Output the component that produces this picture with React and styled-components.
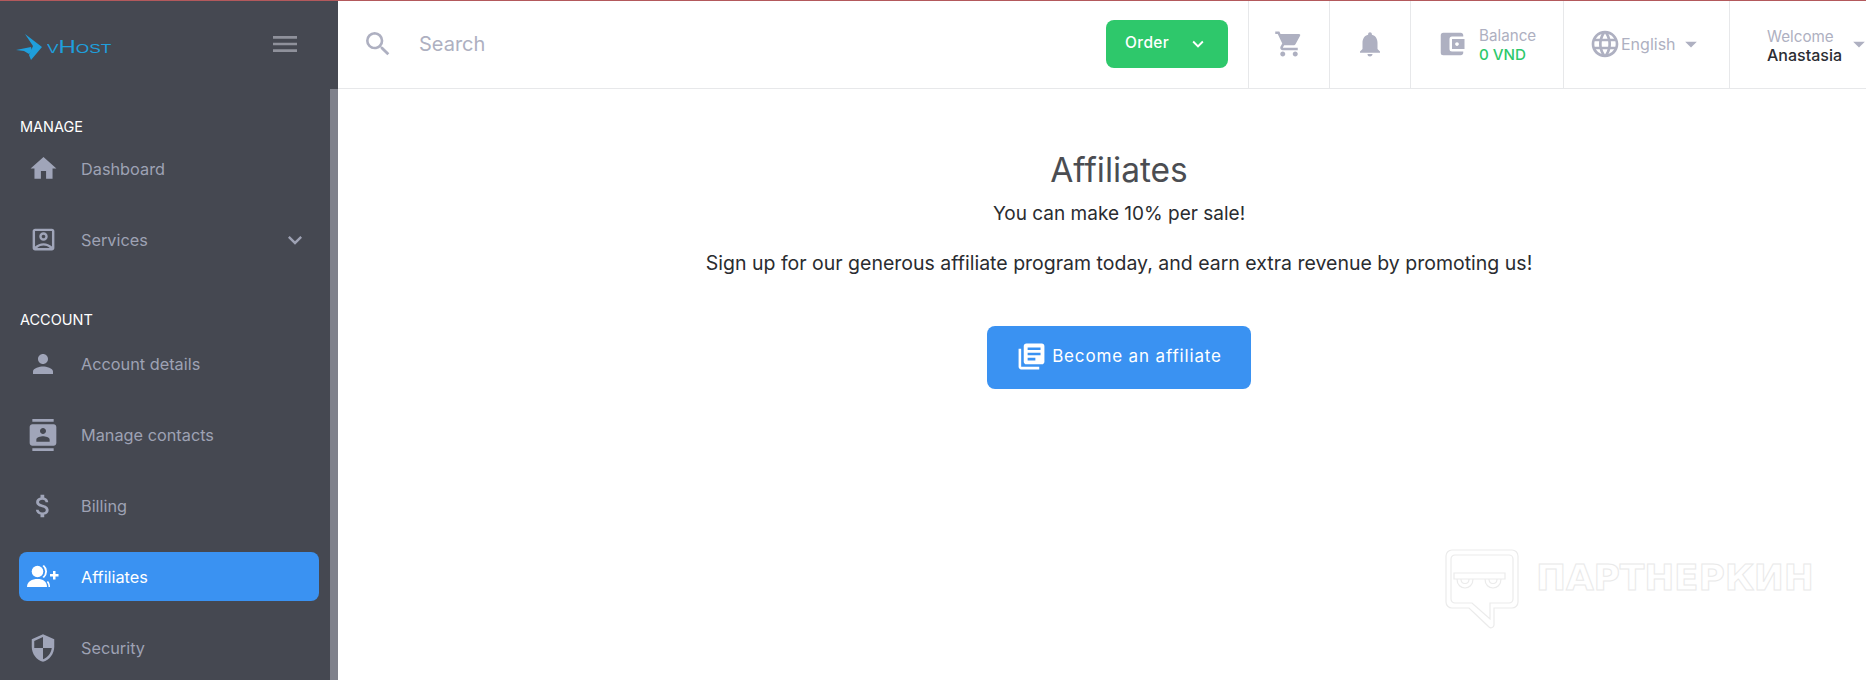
import React from "react";
import styled, { createGlobalStyle } from "styled-components";
import {
  MdHome, MdOutlineAccountBox, MdExpandMore, MdPerson, MdContacts, MdAttachMoney, MdSecurity,
  MdSearch, MdShoppingCart, MdNotifications, MdAccountBalanceWallet, MdLanguage, MdArrowDropDown, MdLibraryBooks, MdMenu,
} from "react-icons/md";

const FONT = `"Inter", "Noto Sans", "Liberation Sans", sans-serif`;

const Global = createGlobalStyle`
  html, body { margin: 0; padding: 0; height: 100%; background: #fff; overflow: hidden; }
  body { font-family: ${FONT}; }
  * { box-sizing: border-box; }
`;

const Page = styled.div`
  height: 680px; width: 1866px; display: flex; border-top: 1px solid #b3595c; overflow: hidden;
`;
const Sidebar = styled.aside`
  position: relative; width: 338px; flex: none; background: #454851; overflow: hidden;
`;
const Thumb = styled.div`
  position: absolute; top: 88px; right: 0; bottom: 0; width: 8px; background: #7f818b;
`;
const Brand = styled.div`
  height: 88px; display: flex; align-items: center; justify-content: space-between; padding: 0 37px 0 16px;
`;
const Logo = styled.div`
  display: flex; align-items: center; color: #1f9fdc; margin-top: 4px;
`;
const LogoText = styled.span`
  font-family: "Liberation Sans", sans-serif; font-size: 18px; line-height: 1; font-variant: small-caps;
  margin-left: 2px; transform: scaleX(1.33); transform-origin: left center;
`;
const MenuBtn = styled.div`
  display: flex; color: #8f919b; font-size: 32px; margin-bottom: 2px;
`;
const Section = styled.div`
  color: #fff; font-size: 14.5px; line-height: 20px; padding-left: 20px;
  margin-top: ${p => p.$top}px; margin-bottom: ${p => p.$bottom}px;
`;
const Item = styled.div`
  height: 49px; margin: 0 19px 22px; border-radius: 8px; display: flex; align-items: center;
  background: ${p => (p.$active ? "#3a92f2" : "transparent")};
  color: ${p => (p.$active ? "#fff" : "#9ea2b4")};
`;
const ItemIcon = styled.span`
  width: 48px; display: flex; justify-content: center; font-size: ${p => p.$size || 30}px; flex: none;
  color: ${p => (p.$active ? "#fff" : "#a0a5b9")};
  margin-right: 14px;
`;
const ItemLabel = styled.span`
  font-size: 16.3px; flex: 1; font-weight: 400;
`;
const ItemArrow = styled.span`
  display: flex; font-size: 28px; margin-right: 10px; color: #9ea2b4;
`;
const Right = styled.div`
  flex: 1; min-width: 0; display: flex; flex-direction: column;
`;
const Header = styled.header`
  height: 88px; flex: none; display: flex; align-items: stretch; border-bottom: 1px solid #e7e8ea; background: #fff;
`;
const SearchBox = styled.div`
  flex: 1; display: flex; align-items: center; padding: 0 0 2px 24px; color: #aeb0c1;
`;
const SearchIcon = styled.span`
  display: flex; font-size: 32px; margin-right: 25px;
`;
const SearchText = styled.span`
  font-size: 20px; color: #aeb0c1;
`;
const OrderBtn = styled.div`
  width: 122px; height: 48px; align-self: center; margin: 0 20px 2px 0; padding: 0 0 2px 19px; border-radius: 8px;
  background: #2ec86b; color: #fff;
  display: flex; align-items: center; font-size: 15.5px; font-weight: 500; letter-spacing: 0.4px;
`;
const OrderArrow = styled.span`
  display: flex; font-size: 22px; margin: 2px 0 0 18px;
`;
const Cell = styled.div`
  width: ${p => p.$w}px; flex: none; border-left: 1px solid #e7e8ea; display: flex; align-items: center;
  justify-content: ${p => (p.$center ? "center" : "flex-start")}; padding: 0 0 2px ${p => p.$pl || 0}px; color: #aeb0c1;
`;
const CellIcon = styled.span`
  display: flex; font-size: ${p => p.$size || 30}px;
`;
const Stack = styled.div`
  display: flex; flex-direction: column; margin-left: ${p => p.$ml || 0}px; margin-top: 3px;
`;
const Small = styled.span`
  font-size: 15.2px; line-height: 19px; color: #aeb0c1;
`;
const Money = styled.span`
  font-size: 15.2px; line-height: 19px; color: #2ec86b; font-weight: 500;
`;
const Name = styled.span`
  font-size: 16px; line-height: 18px; color: #2b2d33; font-weight: 500;
`;
const LangText = styled.span`
  font-size: 16px; color: #aeb0c1; margin-left: 0;
`;
const Caret = styled.span`
  display: flex; font-size: 28px; color: #aeb0c1; margin-left: ${p => p.$ml || 0}px;
`;
const Main = styled.main`
  flex: 1; padding: 62px 0 0 34px; display: flex; flex-direction: column; align-items: center; position: relative;
`;
const Title = styled.h1`
  margin: 0; font-size: 33.5px; line-height: 38px; font-weight: 400; color: #4b4d52;
`;
const Sub = styled.p`
  margin: 13px 0 0; font-size: 19px; line-height: 24px; color: #2a2c30;
`;
const Lead = styled.p`
  margin: 25px 0 0; font-size: 19.5px; line-height: 24px; color: #2a2c30;
`;
const Cta = styled.div`
  margin-top: 51px; width: 264px; height: 63px; padding-bottom: 3px; border-radius: 8px; background: #3a92f2; color: #fff;
  display: flex; align-items: center; justify-content: center; font-size: 17px; font-weight: 400; letter-spacing: 0.85px;
`;
const CtaIcon = styled.span`
  display: flex; font-size: 31px; margin-right: 5px;
`;
const Watermark = styled.div`
  position: absolute; left: 1107px; top: 460px; display: flex; align-items: center; pointer-events: none;
`;
const WatermarkText = styled.span`
  font-family: "DejaVu Sans", sans-serif; font-size: 36px; line-height: 1; font-weight: 700;
  color: transparent; -webkit-text-stroke: 1px #e9e9e9; margin-left: 17px; margin-top: -22px; letter-spacing: -0.2px;
`;

const LogoMark = () => (
  <svg width="29" height="27" viewBox="0 0 29 27" fill="#1f9fdc">
    <path d="M9 0 L26 13 L15 26 L13 21 L17 12 Z" />
    <path d="M0 16 L15 13 L16 17 L13 20 L8 17 Z" />
  </svg>
);

const AffiliateIcon = () => (
  <svg width="32" height="24" viewBox="0 0 32 24" fill="currentColor">
    <circle cx="10.5" cy="6.5" r="5.8" />
    <path d="M0 22c0-5.5 5-8 10.5-8S20 16.500 20 22z" />
    <path d="M15.500 1a7 7 0 0 1 0 11l1.500 1a8.500 8.500 0 0 0 0-13zM21 16c1.500 1.500 2 3.500 2 6h-1.500c0-2-.5-3.500-1.800-5z" />
    <path d="M26 6h2.500v3H31.500v2.500h-3v3H26v-3h-3V9h3z" />
  </svg>
);

const WatermarkLogo = () => (
  <svg width="74" height="80" viewBox="0 0 74 80" fill="none" stroke="#ebebeb" strokeWidth="1.2">
    <path d="M7 1H67a6 6 0 0 1 6 6V53a6 6 0 0 1-6 6H49V76a3 3 0 0 1-5 2L24 59H7a6 6 0 0 1-6-6V7a6 6 0 0 1 6-6z" />
    <path d="M10 6H64a4 4 0 0 1 4 4V50a4 4 0 0 1-4 4H45V70L27 54H10a4 4 0 0 1-4-4V10a4 4 0 0 1 4-4z" />
    <path d="M9 24H60V30H9z" />
    <path d="M12 30c0 12 16 12 16 0M40 30c0 12 16 12 16 0" />
    <path d="M16 30c0 6 8 6 8 0M44 30c0 6 8 6 8 0" />
  </svg>
);

const manage = [
  { label: "Dashboard", Icon: MdHome, size: 31 },
  { label: "Services", Icon: MdOutlineAccountBox, size: 29, arrow: true },
];
const account = [
  { label: "Account details", Icon: MdPerson, size: 30 },
  { label: "Manage contacts", Icon: MdContacts, size: 32 },
  { label: "Billing", Icon: MdAttachMoney, size: 30 },
  { label: "Affiliates", Icon: AffiliateIcon, size: 32, active: true },
  { label: "Security", Icon: MdSecurity, size: 30 },
];

const NavItem = ({ label, Icon, size, arrow, active }) => (
  <Item $active={active}>
    <ItemIcon $size={size} $active={active}><Icon /></ItemIcon>
    <ItemLabel>{label}</ItemLabel>
    {arrow && <ItemArrow><MdExpandMore /></ItemArrow>}
  </Item>
);

export default function App() {
  return (
    <Page>
      <Global />
      <Sidebar>
        <Thumb />
        <Brand>
          <Logo><LogoMark /><LogoText>vHost</LogoText></Logo>
          <MenuBtn><MdMenu /></MenuBtn>
        </Brand>
        <Section $top={28} $bottom={7}>MANAGE</Section>
        {manage.map(i => <NavItem key={i.label} {...i} />)}
        <Section $top={46} $bottom={9}>ACCOUNT</Section>
        {account.map(i => <NavItem key={i.label} {...i} />)}
      </Sidebar>
      <Right>
        <Header>
          <SearchBox>
            <SearchIcon><MdSearch /></SearchIcon>
            <SearchText>Search</SearchText>
          </SearchBox>
          <OrderBtn>Order<OrderArrow><MdExpandMore /></OrderArrow></OrderBtn>
          <Cell $w={81} $center><CellIcon><MdShoppingCart /></CellIcon></Cell>
          <Cell $w={81} $center><CellIcon><MdNotifications /></CellIcon></Cell>
          <Cell $w={153} $pl={26}>
            <CellIcon><MdAccountBalanceWallet /></CellIcon>
            <Stack $ml={12}><Small>Balance</Small><Money>0 VND</Money></Stack>
          </Cell>
          <Cell $w={166} $pl={25}>
            <CellIcon $size={32}><MdLanguage /></CellIcon>
            <LangText>English</LangText>
            <Caret $ml={1}><MdArrowDropDown /></Caret>
          </Cell>
          <Cell $w={137} $pl={37}>
            <Stack><Small>Welcome</Small><Name>Anastasia</Name></Stack>
            <Caret $ml={3}><MdArrowDropDown /></Caret>
          </Cell>
        </Header>
        <Main>
          <Title>Affiliates</Title>
          <Sub>You can make 10% per sale!</Sub>
          <Lead>Sign up for our generous affiliate program today, and earn extra revenue by promoting us!</Lead>
          <Cta><CtaIcon><MdLibraryBooks /></CtaIcon>Become an affiliate</Cta>
          <Watermark><WatermarkLogo /><WatermarkText>ПАРТНЕРКИН</WatermarkText></Watermark>
        </Main>
      </Right>
    </Page>
  );
}
